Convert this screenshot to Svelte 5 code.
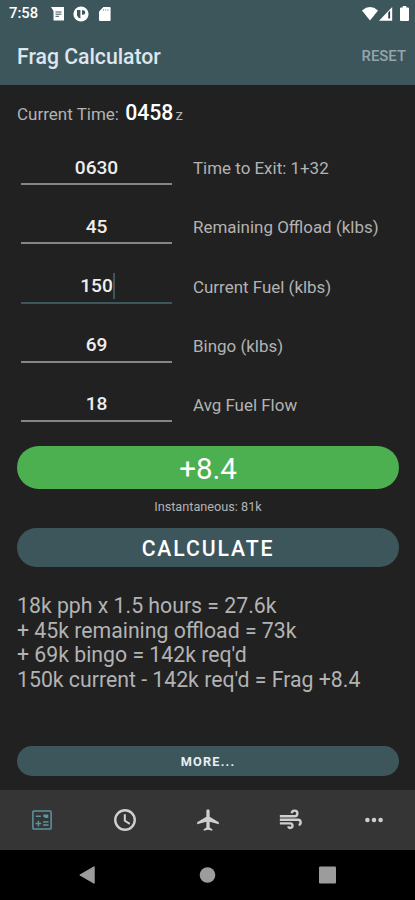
<script lang="ts">
  interface Field {
    id: string;
    value: string;
    label: string;
  }

  let fields: Field[] = $state([
    { id: 'exit', value: '0630', label: 'Time to Exit: 1+32' },
    { id: 'offload', value: '45', label: 'Remaining Offload (klbs)' },
    { id: 'fuel', value: '150', label: 'Current Fuel (klbs)' },
    { id: 'bingo', value: '69', label: 'Bingo (klbs)' },
    { id: 'flow', value: '18', label: 'Avg Fuel Flow' },
  ]);

  let activeField = $state('fuel');
  let activeTab = $state('calculator');

  const tabs = ['calculator', 'clock', 'flight', 'wind', 'more'];

  const steps = [
    '18k pph x 1.5 hours = 27.6k',
    '+ 45k remaining offload = 73k',
    "+ 69k bingo = 142k req'd",
    "150k current - 142k req'd = Frag +8.4",
  ];
</script>

<div class="screen">
  <header>
    <div class="status">
      <span class="clock">7:58</span>
      <svg width="14" height="14" viewBox="0 0 14 14">
        <path d="M0 0h13v13.5H2.5V4z" fill="#fff" />
        <path d="M4.5 5h6M4.5 7.2h6M4.5 9.3h3.5" stroke="#3d565c" />
      </svg>
      <svg class="app-dot" width="16" height="16" viewBox="0 0 16 16">
        <circle cx="8" cy="8" r="7.6" fill="#fff" />
        <path d="M4 4h3.4v8.6a5 5 0 0 1-3.4-3zM9 4.2h1a2.3 2.3 0 0 1 0 4.6H9z" fill="#3d565c" />
      </svg>
      <svg class="sd" width="12" height="14" viewBox="0 0 12 14">
        <path d="M4.4 0H10.6Q11.6 0 11.6 1V13Q11.6 14 10.6 14H1Q0 14 0 13V4.6z" fill="#fff" />
        <path d="M4.5 2v2M6.7 2v2M8.9 2v2" stroke="#a9b6b9" />
      </svg>
      <span class="spacer"></span>
      <svg width="16" height="14" viewBox="0 0 16 14">
        <path d="M0 3.4Q8-3.2 16 3.4L8 13.6z" fill="#fff" />
      </svg>
      <svg class="signal" width="14" height="14" viewBox="0 0 14 14">
        <path d="M13.2 0V13.8H0z" fill="#fff" />
        <path d="M9.3 5.6l1.8-1.8v7.8H9.3z" fill="#29383c" />
      </svg>
      <svg width="9" height="15" viewBox="0 0 9 15">
        <path d="M2.7 0h3.6v1.5H8q1 0 1 1V14q0 1-1 1H1q-1 0-1-1V2.5q0-1 1-1h1.7z" fill="#fff" />
      </svg>
    </div>
    <div class="toolbar">
      <h1>Frag Calculator</h1>
      <button class="reset">RESET</button>
    </div>
  </header>

  <main>
    <p class="time">Current Time: <strong>0458</strong> <small>z</small></p>

    <div class="fields">
      {#each fields as field (field.id)}
        <div class="row">
          <button
            class="input"
            class:focused={activeField === field.id}
            onclick={() => (activeField = field.id)}
          >
            <span class="value">{field.value}</span>
          </button>
          <span class="label">{field.label}</span>
        </div>
      {/each}
    </div>

    <div class="result">+8.4</div>
    <p class="instant">Instantaneous: 81k</p>
    <button class="calculate">CALCULATE</button>

    <div class="steps">
      {#each steps as step}
        <p>{step}</p>
      {/each}
    </div>

    <button class="more">MORE...</button>
  </main>

  <nav class="tabs">
    {#each tabs as tab}
      <button class:active={activeTab === tab} aria-label={tab} onclick={() => (activeTab = tab)}>
        <svg width="26" height="26" viewBox="0 0 24 24" fill="currentColor">
          {#if tab === 'calculator'}
            <rect x="3.6" y="3.6" width="16.8" height="16.8" rx="1" fill="none" stroke="currentColor" stroke-width="1.4" />
            <path d="M6.3 7.8h4.6v1.4H6.3zM13.2 7h4.6v3.2h-3.3v-1h-1.3zM13 13.2h5v1.3h-5zM13 15.9h5v1.3h-5zM8 12.7h1.4v1.9h1.9V16H9.4v1.9H8V16H6.1v-1.4H8z" />
          {:else if tab === 'clock'}
            <circle cx="12" cy="12" r="9" fill="none" stroke="currentColor" stroke-width="2.2" />
            <path d="M10.9 6.8h1.9v5.5l4.1 2.5-.9 1.5-5.1-3.1z" />
          {:else if tab === 'flight'}
            <path d="M22 16v-2l-8.5-5V3.5c0-.83-.67-1.5-1.5-1.5s-1.5.67-1.5 1.5V9L2 14v2l8.5-2.5V19L8 20.5V22l4-1 4 1v-1.5L13.5 19v-5.5z" />
          {:else if tab === 'wind'}
            <g fill="none" stroke="currentColor" stroke-width="2.2">
              <path d="M1.7 8.5h13.6a2.6 2.6 0 1 0-2.6-2.7" />
              <path d="M1.7 11.8h16.6a2.5 2.5 0 0 1 .8 4.9" />
              <path d="M1.7 15.1h9.6a2.1 2.1 0 1 1-2 2.8" />
            </g>
          {:else}
            <circle cx="5.9" cy="12" r="2.1" />
            <circle cx="12" cy="12" r="2.1" />
            <circle cx="18.1" cy="12" r="2.1" />
          {/if}
        </svg>
      </button>
    {/each}
  </nav>

  <footer class="system">
    <svg width="17" height="18" viewBox="0 0 17 18">
      <path d="M15.2.7v16.6L.8 9z" fill="#9c9c9c" stroke="#9c9c9c" stroke-linejoin="round" />
    </svg>
    <svg width="17" height="18" viewBox="0 0 17 18">
      <circle cx="8.5" cy="9" r="7.8" fill="#9c9c9c" />
    </svg>
    <svg width="17" height="18" viewBox="0 0 17 18">
      <rect y=".5" width="17" height="17" rx="1" fill="#9c9c9c" />
    </svg>
  </footer>
</div>

<style>
  :global(body) {
    background: #212121;
  }

  .screen {
    display: flex;
    flex-direction: column;
    width: 415px;
    height: 900px;
    overflow: hidden;
    background: #212121;
    color: #b3b3b3;
    font-family: Roboto, sans-serif;
  }

  h1,
  p {
    margin: 0;
  }

  button {
    padding: 0;
    border: 0;
    background: none;
    color: inherit;
    font: inherit;
  }

  svg {
    display: block;
    flex: none;
  }

  header {
    height: 85px;
    background: #3d565c;
  }

  .status {
    display: flex;
    align-items: center;
    height: 27px;
    padding: 0 6px 0 9px;
    color: #fff;
  }

  .clock {
    width: 42px;
    font-size: 14.8px;
    font-weight: 500;
    line-height: 29px;
  }

  .app-dot {
    margin-left: 8px;
  }

  .sd {
    margin-left: 10px;
  }

  .spacer {
    flex: 1;
  }

  .signal {
    margin: 0 7px 0 1px;
  }

  .toolbar {
    display: flex;
    align-items: center;
    justify-content: space-between;
    height: 58px;
    padding: 0 9px 0 17px;
  }

  h1 {
    color: #dde6ee;
    font-size: 21.2px;
    font-weight: 500;
  }

  .reset {
    color: #96a5ad;
    font-size: 14.9px;
    font-weight: 500;
  }

  main {
    display: flex;
    flex-direction: column;
    height: 705px;
    padding: 0 16px 0 17px;
    box-sizing: border-box;
  }

  .time {
    height: 53.6px;
    font-size: 17px;
    line-height: 56px;
  }

  .time strong {
    margin-left: 2px;
    color: #fff;
    font-size: 21.2px;
    font-weight: 500;
  }

  .time small {
    margin-left: -2px;
    font-size: 15px;
  }

  .row {
    display: flex;
    align-items: center;
    height: 59.2px;
  }

  .input {
    display: flex;
    align-items: center;
    justify-content: center;
    width: 151px;
    height: 34px;
    margin: 0 21px 0 4px;
    border-bottom: 2px solid #858585;
    color: #eee;
    font-size: 19.1px;
    font-weight: 500;
  }

  .value {
    display: flex;
    align-items: center;
    height: 26px;
  }

  .focused {
    border-bottom-color: #3d565c;
  }

  .focused .value {
    margin-right: -2px;
    border-right: 2px solid #3d565c;
  }

  .label {
    font-size: 16.95px;
  }

  .result {
    height: 43px;
    margin-top: 11.4px;
    border-radius: 22px;
    background: #4caf50;
    color: #fff;
    font-size: 29.5px;
    line-height: 46px;
    text-align: center;
  }

  .instant {
    height: 39px;
    font-size: 12.7px;
    line-height: 35px;
    text-align: center;
  }

  .calculate {
    height: 39px;
    border-radius: 20px;
    background: #3d565c;
    color: #fff;
    font-size: 21.2px;
    font-weight: 500;
    letter-spacing: 1.9px;
    line-height: 41px;
  }

  .steps {
    height: 152px;
    margin-top: 27px;
    font-size: 21.25px;
    line-height: 24.7px;
    white-space: nowrap;
  }

  .more {
    height: 30px;
    border-radius: 15px;
    background: #3d565c;
    color: #e8f0f5;
    font-size: 12.7px;
    font-weight: 700;
    letter-spacing: 1.2px;
    line-height: 31px;
  }

  .tabs {
    display: grid;
    grid-template-columns: repeat(5, 1fr);
    height: 60px;
    background: #353535;
    color: #cfcfcf;
  }

  .tabs button {
    display: grid;
    place-items: center;
  }

  .tabs .active {
    color: #5c949f;
  }

  .system {
    display: flex;
    align-items: center;
    justify-content: center;
    gap: 103px;
    height: 50px;
    background: #000;
  }
</style>
